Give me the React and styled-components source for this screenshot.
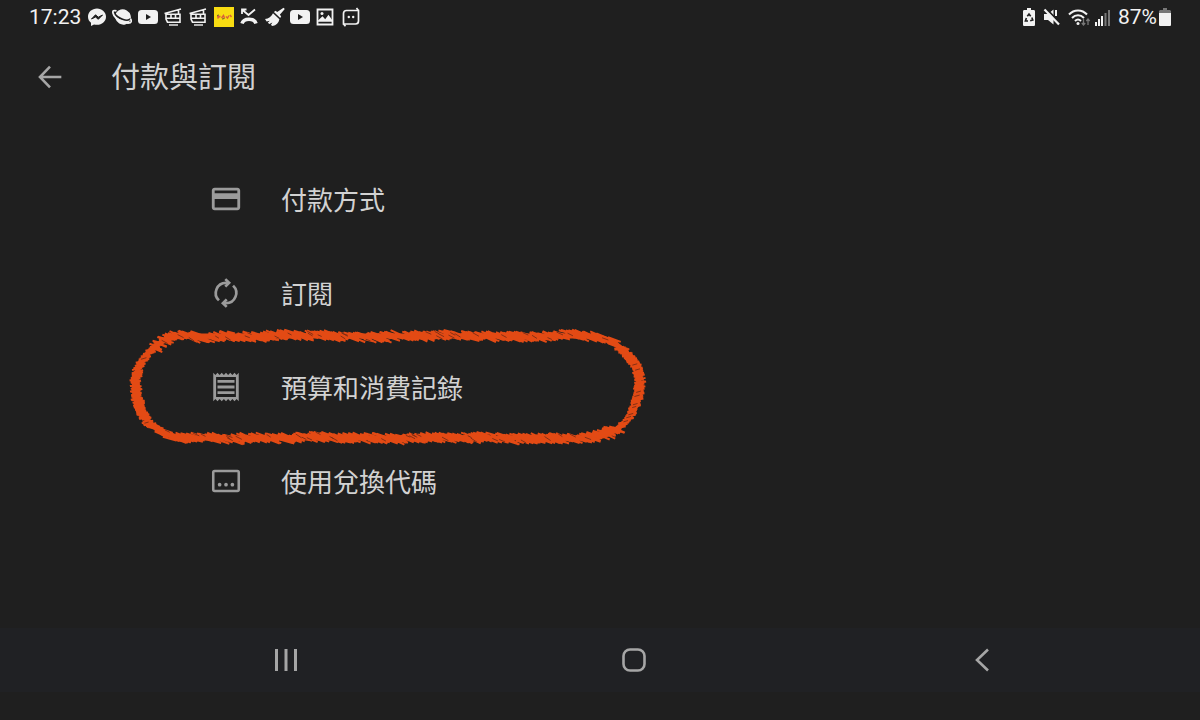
import styled, { createGlobalStyle } from "styled-components";

const GlobalStyle = createGlobalStyle`
  * {
    box-sizing: border-box;
  }

  body {
    margin: 0;
    background: #1f1f1f;
    font-family: Roboto, "Noto Sans CJK TC", sans-serif;
  }
`;

const Page = styled.div`
  display: flex;
  flex-direction: column;
  min-height: 100vh;
  padding-bottom: 28px;
  background: #1f1f1f;
  color: #d2d2d2;
`;

const StatusBar = styled.div`
  display: flex;
  justify-content: space-between;
  align-items: center;
  height: 34px;
  padding: 0 29px;
  color: #f2f2f2;
  font-size: 21px;
  line-height: 24px;
`;

const StatusGroup = styled.div`
  display: flex;
  align-items: center;
  gap: ${({ $gap }) => $gap}px;
`;

const Notifications = styled.div`
  display: grid;
  grid-template-columns: repeat(11, 1fr);
  justify-items: center;
  width: 279px;
`;

const Header = styled.header`
  display: flex;
  align-items: center;
  gap: 44px;
  height: 86px;
  padding-left: 33px;
`;

const IconButton = styled.button`
  display: flex;
  justify-content: center;
  align-items: center;
  padding: 0;
  border: none;
  background: none;
  color: #a6a6a6;
  cursor: pointer;
`;

const Title = styled.h1`
  margin: 0;
  padding-top: 2px;
  font-size: 29px;
  line-height: 40px;
  font-weight: 400;
`;

const Menu = styled.ul`
  flex: 1;
  margin: 0;
  padding: 32px 0;
  list-style: none;
`;

const MenuItem = styled.li`
  position: relative;
`;

const MenuButton = styled.button`
  display: flex;
  align-items: center;
  gap: 38px;
  width: 100%;
  height: 94px;
  padding: 0 0 0 209px;
  border: none;
  background: none;
  color: #d2d2d2;
  font-family: inherit;
  font-size: 26px;
  line-height: 36px;
  text-align: left;
  cursor: pointer;

  svg {
    color: #9b9b9b;
  }
`;

const MenuLabel = styled.span`
  padding-top: 4px;
`;

const Marker = styled.svg`
  position: absolute;
  top: -22px;
  left: 122px;
  pointer-events: none;
`;

const NavBar = styled.nav`
  display: grid;
  grid-template-columns: repeat(3, 1fr);
  height: 64px;
  padding: 0 44px 0 112px;
  background: #202124;
`;

const Icon = ({ size = 20, box = 20, children }) => (
  <svg
    width={size}
    height={size}
    viewBox={`0 0 ${box} ${box}`}
    fill="currentColor"
    aria-hidden="true"
  >
    {children}
  </svg>
);

const Line = ({ w = 2, ...rest }) => (
  <path fill="none" stroke="currentColor" strokeWidth={w} {...rest} />
);

const Messenger = () => (
  <Icon>
    <path d="M10 1.500c-5 0-9 3.600-9 8.200 0 2.500 1.100 4.600 3 6.100V19l3-1.600c1 .3 2 .4 3 .4 5 0 9-3.600 9-8.100s-4-8.200-9-8.200z" />
    <path
      d="M4.500 12 8.500 7.800l2.800 2.400L15.500 8l-4.200 4.300-2.700-2.300z"
      fill="#1f1f1f"
      stroke="#1f1f1f"
    />
  </Icon>
);

const Saucer = () => (
  <Icon>
    <ellipse cx="11" cy="10" rx="8" ry="7.500" transform="rotate(30 11 10)" />
    <path
      d="M2.500 6.500C4 9 7 11 10.500 12.300c3.500 1.300 6.500 1.300 8-.5"
      fill="none"
      stroke="#1f1f1f"
      strokeWidth="1.700"
    />
    <Line w={1.800} d="M4.500 3.800C1.500 3 .5 4 1 6c.8 3.500 4.500 6.500 8.500 8.300 4.500 2 9 2.500 9.700.2.200-.8 0-1.600-.8-2.600" />
  </Icon>
);

const Video = () => (
  <Icon>
    <rect y="3" width="20" height="14" rx="3.500" />
    <path d="M8 7v6l5-3z" fill="#1f1f1f" />
  </Icon>
);

const CableCar = () => (
  <Icon>
    <Line w={1.600} d="M1.500 6.500 18 2M3 7.300h14v7.900H4.500L3 12zM3 11.200h14M8 7.500v4M12.500 7.500v4M15.500 3v4.500" />
    <Line w={1.400} d="M6 18h9" />
  </Icon>
);

const YellowApp = () => (
  <Icon>
    <rect width="20" height="20" fill="#f8dc12" />
    <path
      d="M3 9.500h3.500M3.500 11.500 6 9M7.500 11l2-2.500 1 2.500M12 9.500l1.500 1.500L15 8.500M16 8l1.500 2"
      fill="none"
      stroke="#d9603a"
      strokeWidth="1.400"
    />
    <path d="M3 8.500 5 8M8 12l2.500-.5" stroke="#6b5c2e" fill="none" />
  </Icon>
);

const MissedCall = () => (
  <Icon>
    <Line w={1.800} d="M3 7V2.500h4.500M3.500 3l6 5L16 2.500" />
    <Line w={3.600} d="M3 16.500c1-3.500 4-4.300 7-4.300s6 .8 7 4.300" />
  </Icon>
);

const Broom = () => (
  <Icon>
    <path d="m18.500.8 1.300 1.300-5 5.700 1.400 1.500-1 1.600-6.300-6 1.700-1.200 1.600 1.300zM8 6.200l6.400 6c-.6 3.400-3.100 6-6.900 6.900l-1.600-1.200 1.500-2.300-3 1.500-1.600-1.400 2-2-3.200.9L0 12c3.800-.4 6.300-2.300 8-5.800z" />
  </Icon>
);

const Picture = () => (
  <Icon>
    <Line w={1.800} d="M2.500 2.500h15v15h-15z" />
    <path d="m3 13.500 4.500-4.200 2.700 3 3.300-4.600 3.500 5v2H3z" />
    <circle cx="7" cy="6.500" r="1.500" />
  </Icon>
);

const FrameBot = () => (
  <Icon>
    <Line w={1.700} d="M2.500 13V6.500c0-2 1-3 3-3h12v10.500c0 2-1 3-3 3h-12zM17.500 3.500 15.500 1M2.500 17l2 2.300" />
    <circle cx="7.800" cy="10" r="1.200" />
    <circle cx="12.200" cy="10" r="1.200" />
  </Icon>
);

const notifications = [
  Messenger,
  Saucer,
  Video,
  CableCar,
  CableCar,
  YellowApp,
  MissedCall,
  Broom,
  Video,
  Picture,
  FrameBot,
];

const PowerSaving = () => (
  <svg width="12" height="18" viewBox="0 0 12 18" fill="currentColor">
    <path d="M4 0h4v2h2.500C11.500 2 12 2.500 12 3.500v13c0 1-.5 1.500-1.500 1.500h-9C.5 18 0 17.500 0 16.500v-13C0 2.500.5 2 1.500 2H4z" />
    <path
      d="M4.300 8.300 6 6l1.700 2.300M8.800 9.500l1 2.500-2.600.8M5 13H2.400l1-3"
      fill="none"
      stroke="#1f1f1f"
      strokeWidth="1.600"
    />
  </svg>
);

const Muted = () => (
  <svg width="17" height="18" viewBox="0 0 17 18" fill="currentColor">
    <path d="M1 6h4l5.500-4.500v15L5 12H1z" />
    <Line w={2} d="M13 2v6" />
    <path d="M2.500 0 17 15" stroke="#1f1f1f" strokeWidth="2" />
    <Line w={2.200} d="M1.500 1.500 16 16.500" />
  </svg>
);

const Wifi = () => (
  <svg width="23" height="18" viewBox="0 0 23 18" fill="currentColor">
    <Line w={2} d="M1 6.500c5-5.500 13-5.500 18 0M4 10c3.500-3.700 8.500-3.700 12 0M7 13c2-2 4-2 6 0" />
    <circle cx="10" cy="15.500" r="1.500" />
    <path
      d="M15.500 11v6M13.800 15l1.700 2 1.700-2M20 17v-6M18.300 13l1.700-2 1.700 2"
      fill="none"
      stroke="#777"
      strokeWidth="1.300"
    />
  </svg>
);

const Signal = () => (
  <svg width="15" height="17" viewBox="0 0 15 17" fill="currentColor">
    <path d="M0 13h2v4H0zM3 10h2v7H3zM6 7h2v10H6z" />
    <path d="M9.500 4h2v13h-2zM13 1h2v16h-2z" fill="#777" />
  </svg>
);

const Battery = () => (
  <svg width="12" height="18" viewBox="0 0 12 18" fill="currentColor">
    <path d="M4 0h4v2h3l1 1v3H0V3l1-1h3z" fill="#777" />
    <path d="M0 5h12v11.500c0 1-.5 1.500-1.500 1.500h-9C.5 18 0 17.500 0 16.500z" />
  </svg>
);

const CardIcon = () => (
  <Icon size={34} box={24}>
    <path d="M20 4H4c-1.110 0-2 .89-2 2v12c0 1.110.89 2 2 2h16c1.110 0 2-.89 2-2V6c0-1.110-.89-2-2-2zm0 14H4v-6h16v6zm0-10H4V6h16v2z" />
  </Icon>
);

const RenewIcon = () => (
  <Icon size={34} box={24}>
    <Line w={1.900} d="M7 17.200A7.200 7.200 0 0 1 12 4.800h1.500M17 6.800A7.200 7.200 0 0 1 12 19.200h-1.500" />
    <Line w={1.900} d="m11.500 2.200 2.700 2.600-2.700 2.700M12.500 16.500l-2.700 2.700 2.700 2.600" />
  </Icon>
);

const ReceiptIcon = () => (
  <Icon size={34} box={24}>
    <path d="M19.500 3.500L18 2l-1.500 1.500L15 2l-1.500 1.500L12 2l-1.500 1.500L9 2 7.500 3.500 6 2 4.500 3.500 3 2v20l1.500-1.500L6 22l1.500-1.500L9 22l1.500-1.500L12 22l1.500-1.500L15 22l1.500-1.500L18 22l1.500-1.500L21 22V2l-1.500 1.500zM19 19.090H5V4.910h14v14.180zM6 15h12v2H6zm0-4h12v2H6zm0-4h12v2H6z" />
  </Icon>
);

const CodeIcon = () => (
  <Icon size={34} box={24}>
    <rect x="3" y="5" width="18" height="14" rx="1" fill="none" stroke="currentColor" strokeWidth="1.800" />
    <circle cx="7.500" cy="14.600" r="1.300" />
    <circle cx="12" cy="14.600" r="1.300" />
    <circle cx="16.500" cy="14.600" r="1.300" />
  </Icon>
);

const menu = [
  { label: "付款方式", icon: CardIcon },
  { label: "訂閱", icon: RenewIcon },
  { label: "預算和消費記錄", icon: ReceiptIcon, marked: true },
  { label: "使用兌換代碼", icon: CodeIcon },
];

// point on the pill outline at distance d, starting at the top left
const pillPoint = (d) => {
  const straight = 402;
  const r = 51;
  const arc = Math.PI * r;
  if (d < straight) return [64 + d, 18];
  d -= straight;
  if (d < arc) {
    const a = d / r - Math.PI / 2;
    return [466 + r * Math.cos(a), 69 + r * Math.sin(a)];
  }
  d -= arc;
  if (d < straight) return [466 - d, 120];
  const a = (d - straight) / r + Math.PI / 2;
  return [64 + r * Math.cos(a), 69 + r * Math.sin(a)];
};

// short slanted crayon strokes laid next to each other along the outline
const crayonStrokes = (() => {
  let seed = 11;
  const random = () => {
    seed = (seed * 16807) % 2147483647;
    return seed / 2147483647;
  };
  const total = 804 + 2 * Math.PI * 51;
  let strokes = "";
  let cracks = "";
  for (let d = 0; d < total; d += 0.9) {
    const [x, y] = pillPoint(d);
    const side = Math.abs(y - 69) < 40;
    const wave = Math.sin(d / 9) * 0.6 + Math.sin(d / 23) * 0.7;
    const len = side ? 4 + random() * 1.8 : 4 + random() * 3;
    const tilt = side ? -0.2 : 0.25 + random() * 0.2;
    const cx = x + (random() - 0.5) * 2 + (side ? wave : 0);
    const cy = y + (random() - 0.5) * (side ? 2 : 7) + (side ? 0 : wave);
    const dx = len * Math.cos(tilt);
    const dy = len * Math.sin(tilt);
    strokes += `M${cx - dx} ${cy - dy}L${cx + dx} ${cy + dy}`;
    if (random() < 0.07) {
      cracks += `M${cx - dx * 0.6} ${cy - dy * 0.8}l${dx} ${dy * 1.4}`;
    }
  }
  return { strokes, cracks };
})();

const CrayonMarker = () => (
  <Marker width="532" height="138" viewBox="0 0 532 138" fill="none" aria-hidden="true">
    <rect x="13" y="18" width="504" height="102" rx="51" stroke="#e34a14" strokeWidth="5" />
    <path d={crayonStrokes.strokes} stroke="#e34a14" strokeWidth="2" />
    <path d={crayonStrokes.cracks} stroke="#7a2d14" strokeWidth="0.900" />
  </Marker>
);

export default function App() {
  return (
    <>
      <GlobalStyle />
      <Page>
        <StatusBar>
          <StatusGroup $gap={3}>
            <span>17:23</span>
            <Notifications>
              {notifications.map((Notification, i) => (
                <Notification key={i} />
              ))}
            </Notifications>
          </StatusGroup>
          <StatusGroup $gap={8}>
            <PowerSaving />
            <Muted />
            <StatusGroup $gap={4}>
              <Wifi />
              <Signal />
            </StatusGroup>
            <StatusGroup $gap={2}>
              <span>87%</span>
              <Battery />
            </StatusGroup>
          </StatusGroup>
        </StatusBar>

        <Header>
          <IconButton aria-label="返回">
            <Icon size={34} box={24}>
              <Line w={1.800} d="M20 12H5M12 4.600 4.900 12l7.100 7.400" />
            </Icon>
          </IconButton>
          <Title>付款與訂閱</Title>
        </Header>

        <Menu>
          {menu.map(({ label, icon: ItemIcon, marked }) => (
            <MenuItem key={label}>
              <MenuButton>
                <ItemIcon />
                <MenuLabel>{label}</MenuLabel>
              </MenuButton>
              {marked && <CrayonMarker />}
            </MenuItem>
          ))}
        </Menu>

        <NavBar>
          <IconButton aria-label="最近">
            <Icon size={24} box={24}>
              <Line w={3} d="M2.500 1v22M12 1v22M21.500 1v22" />
            </Icon>
          </IconButton>
          <IconButton aria-label="主畫面">
            <Icon size={26} box={26}>
              <rect x="2.500" y="2.500" width="21" height="21" rx="6.500" fill="none" stroke="currentColor" strokeWidth="2.600" />
            </Icon>
          </IconButton>
          <IconButton aria-label="上一頁">
            <Icon size={24} box={24}>
              <Line w={2.600} d="M18 1.500 7 12l11 10.500" />
            </Icon>
          </IconButton>
        </NavBar>
      </Page>
    </>
  );
}
